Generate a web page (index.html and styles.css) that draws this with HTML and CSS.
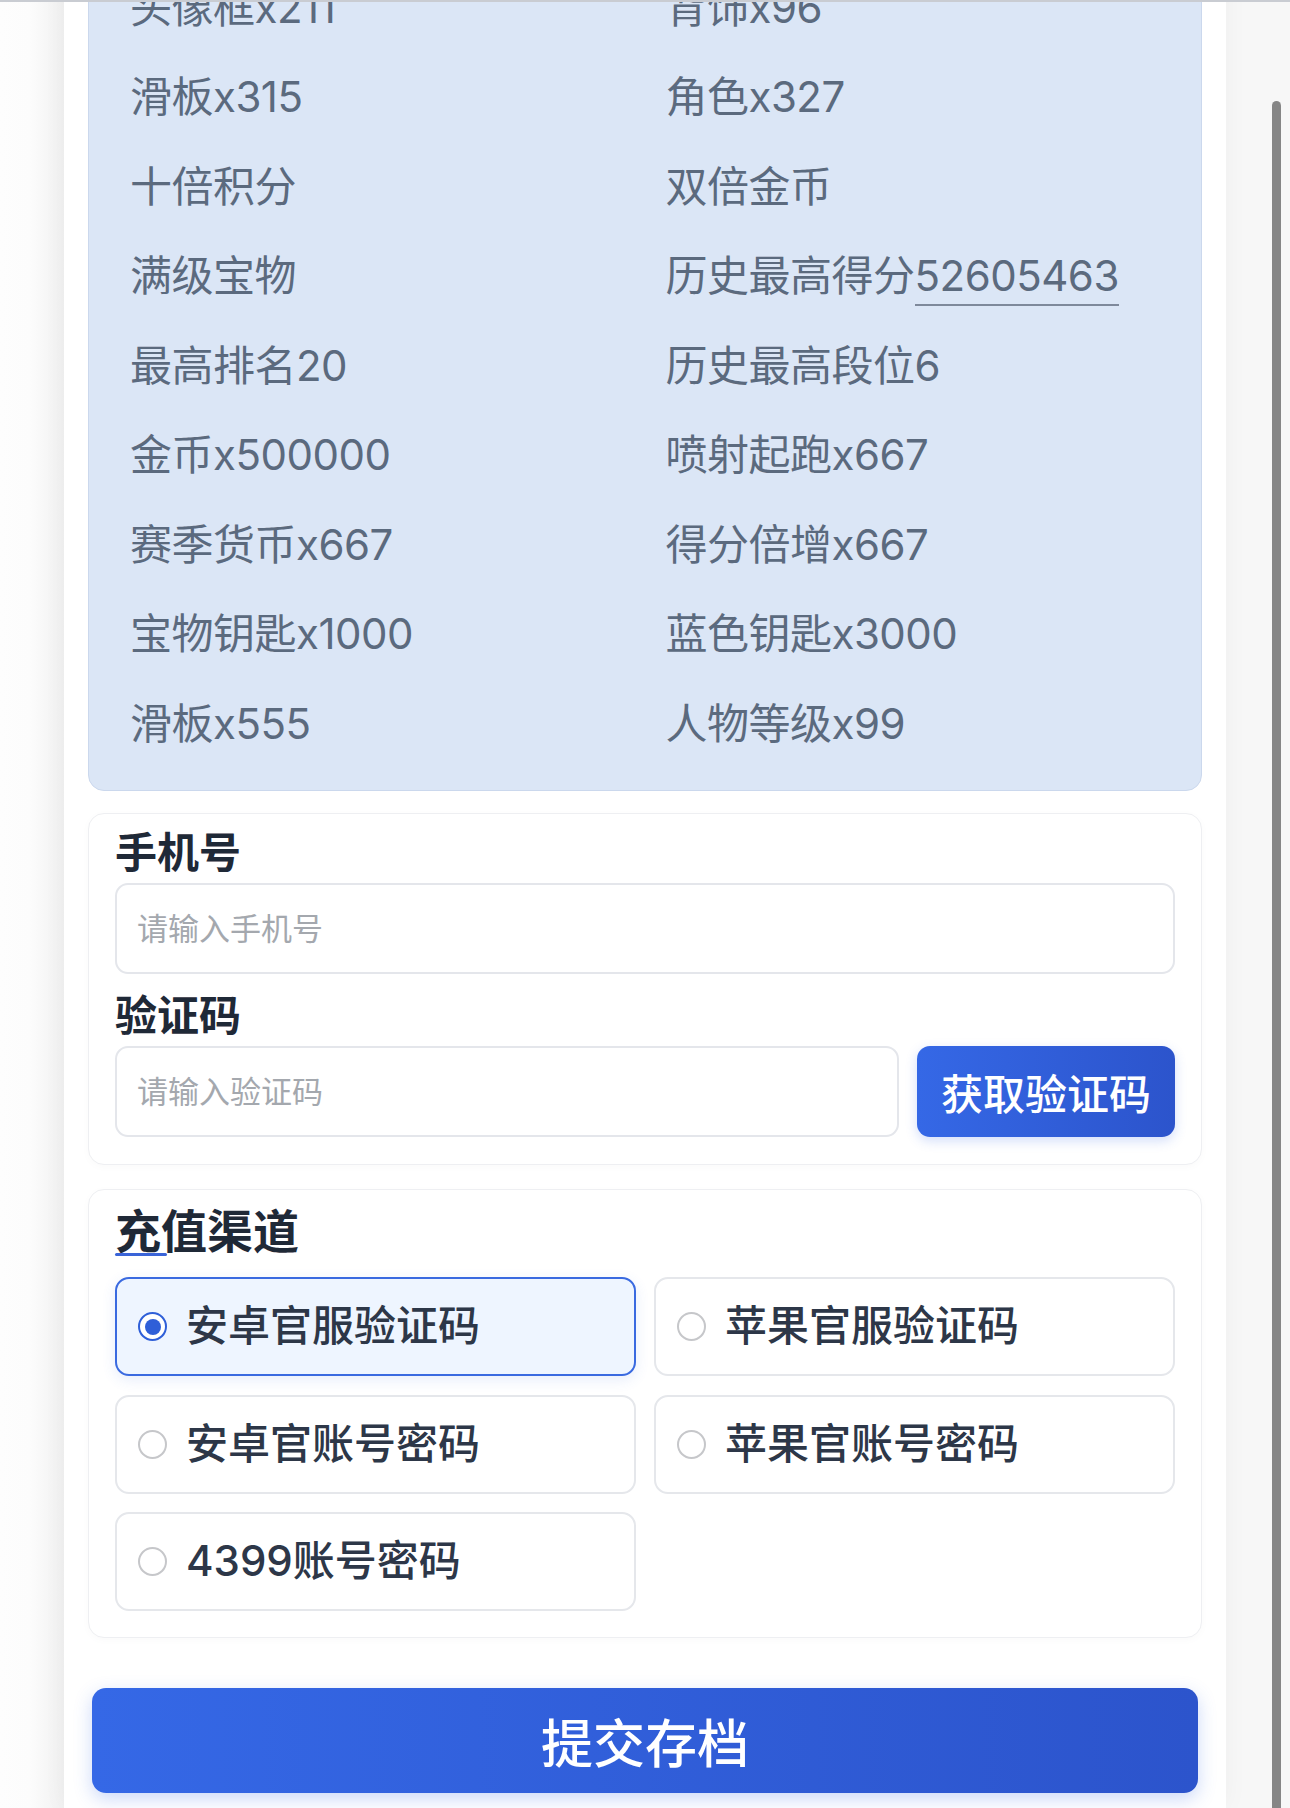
FILE: index.html
```html
<!DOCTYPE html>
<html lang="zh-CN">
<head>
<meta charset="utf-8">
<title>提交存档</title>
<link rel="stylesheet" href="styles.css">
</head>
<body>
<div class="topline"></div>
<div class="scroll-thumb"></div>
<main class="panel">
  <section class="rewards">
    <div class="reward-grid">
      <div class="item">头像框x211</div>
      <div class="item">背饰x96</div>
      <div class="item">滑板x315</div>
      <div class="item">角色x327</div>
      <div class="item">十倍积分</div>
      <div class="item">双倍金币</div>
      <div class="item">满级宝物</div>
      <div class="item">历史最高得分<span class="num">52605463</span></div>
      <div class="item">最高排名20</div>
      <div class="item">历史最高段位6</div>
      <div class="item">金币x500000</div>
      <div class="item">喷射起跑x667</div>
      <div class="item">赛季货币x667</div>
      <div class="item">得分倍增x667</div>
      <div class="item">宝物钥匙x1000</div>
      <div class="item">蓝色钥匙x3000</div>
      <div class="item">滑板x555</div>
      <div class="item">人物等级x99</div>
    </div>
  </section>

  <section class="card form-card">
    <div class="field">
      <div class="label">手机号</div>
      <input class="input" type="text" placeholder="请输入手机号">
    </div>
    <div class="field field-next">
      <div class="label">验证码</div>
      <div class="code-row">
        <input class="input" type="text" placeholder="请输入验证码">
        <button class="code-btn" type="button">获取验证码</button>
      </div>
    </div>
  </section>

  <section class="card channel-card">
    <h2 class="section-title">充值渠道</h2>
    <div class="options">
      <div class="option selected"><span class="radio"></span><span class="opt-text">安卓官服验证码</span></div>
      <div class="option"><span class="radio"></span><span class="opt-text">苹果官服验证码</span></div>
      <div class="option"><span class="radio"></span><span class="opt-text">安卓官账号密码</span></div>
      <div class="option"><span class="radio"></span><span class="opt-text">苹果官账号密码</span></div>
      <div class="option"><span class="radio"></span><span class="opt-text">4399账号密码</span></div>
    </div>
  </section>

  <button class="submit" type="button">提交存档</button>
</main>
</body>
</html>
```

FILE: styles.css
```css
* {
  box-sizing: border-box;
}

html {
  overflow: hidden;
}

html,
body {
  margin: 0;
  padding: 0;
}

body {
  font-family: "Inter", "Noto Sans CJK SC", sans-serif;
  background: linear-gradient(to right, #fdfdfd 0, #fcfcfc 30px, #f1f1f1 64px, #f7f7f7 64px, #f7f7f7 100%);
  min-height: 1808px;
}

.topline {
  position: fixed;
  top: 0;
  left: 0;
  right: 0;
  height: 2px;
  background: #c9ccd2;
  z-index: 10;
}

.scroll-thumb {
  position: fixed;
  top: 101px;
  right: 9px;
  width: 9px;
  height: 1760px;
  border-radius: 5px;
  background: #868686;
  z-index: 10;
}

.panel {
  width: 1162px;
  margin: -60.5px 0 0 64px;
  padding: 0 24px 15px;
  background: #ffffff;
  box-shadow: 0 0 24px rgba(0, 0, 0, 0.04);
  display: flex;
  flex-direction: column;
}

/* rewards card */
.rewards {
  background: #dbe6f6;
  border: 1px solid #cbd8ed;
  border-radius: 16px;
  padding: 22px 44px 22px 41px;
}

.reward-grid {
  display: grid;
  grid-template-columns: 1fr 1fr;
  column-gap: 44px;
}

.item {
  font-size: 42px;
  line-height: 89.5px;
  letter-spacing: -0.5px;
  color: #5b6a7e;
  white-space: nowrap;
}

.num {
  border-bottom: 2px solid #7e899b;
  padding-bottom: 3px;
}

/* generic white card */
.card {
  background: #ffffff;
  border: 1px solid #eeeff2;
  border-radius: 16px;
  box-shadow: 0 2px 8px rgba(0, 0, 0, 0.025);
}

.form-card {
  margin-top: 22px;
  padding: 14px 26px 27px;
}

.field-next {
  margin-top: 17px;
}

.label {
  font-size: 42px;
  line-height: 50px;
  font-weight: 700;
  color: #1f2937;
  margin-bottom: 5px;
}

.input {
  display: block;
  width: 100%;
  height: 91px;
  padding: 0 20px;
  border: 2px solid #e4e6eb;
  border-radius: 13px;
  background: #ffffff;
  font-family: "Inter", "Noto Sans CJK SC", sans-serif;
  font-size: 31px;
  color: #1f2937;
  outline: none;
}

.input::placeholder {
  color: #a4a8ae;
}

.code-row {
  display: flex;
  gap: 18px;
}

.code-row .input {
  flex: 1;
  width: auto;
}

.code-btn {
  flex: 0 0 258px;
  height: 91px;
  border: none;
  border-radius: 13px;
  background: linear-gradient(to right, #3568e6, #2c54cc);
  color: #ffffff;
  font-family: "Inter", "Noto Sans CJK SC", sans-serif;
  font-size: 42px;
  font-weight: 500;
  box-shadow: 0 4px 12px rgba(53, 104, 230, 0.22);
  padding: 0;
}

/* channel card */
.channel-card {
  margin-top: 24px;
  padding: 14px 26px 26px;
}

.section-title {
  position: relative;
  margin: 0;
  font-size: 46px;
  line-height: 54px;
  font-weight: 700;
  color: #1f2937;
  align-self: flex-start;
}

.section-title::after {
  content: "";
  position: absolute;
  left: 0;
  bottom: 2px;
  width: 52px;
  height: 3px;
  border-radius: 2px;
  background: #3a64d8;
}

.options {
  margin-top: 19px;
  display: grid;
  grid-template-columns: 1fr 1fr;
  column-gap: 18px;
  row-gap: 18.5px;
}

.option {
  height: 99px;
  display: flex;
  align-items: center;
  gap: 19px;
  padding-left: 21px;
  border: 2px solid #e5e7eb;
  border-radius: 14px;
  background: #ffffff;
}

.option.selected {
  border-color: #3a6ae0;
  background: #eef5ff;
  box-shadow: 0 4px 14px rgba(58, 106, 224, 0.12);
}

.radio {
  flex: 0 0 29px;
  width: 29px;
  height: 29px;
  border-radius: 50%;
  border: 2px solid #c6c7ca;
  background: #ffffff;
  display: flex;
  align-items: center;
  justify-content: center;
}

.option.selected .radio {
  border: 2.5px solid #2f5fd8;
}

.option.selected .radio::after {
  content: "";
  width: 16px;
  height: 16px;
  border-radius: 50%;
  background: #2f5fd8;
}

.opt-text {
  font-size: 42px;
  line-height: 1.2;
  font-weight: 500;
  color: #2d3748;
  white-space: nowrap;
}

/* submit */
.submit {
  margin: 50px 4px 0;
  height: 105px;
  border: none;
  border-radius: 14px;
  background: linear-gradient(to right, #3568e6, #2c54cc);
  color: #ffffff;
  font-family: "Inter", "Noto Sans CJK SC", sans-serif;
  font-size: 52px;
  font-weight: 500;
  box-shadow: 0 6px 18px rgba(53, 104, 230, 0.25);
  padding: 0;
}
```
